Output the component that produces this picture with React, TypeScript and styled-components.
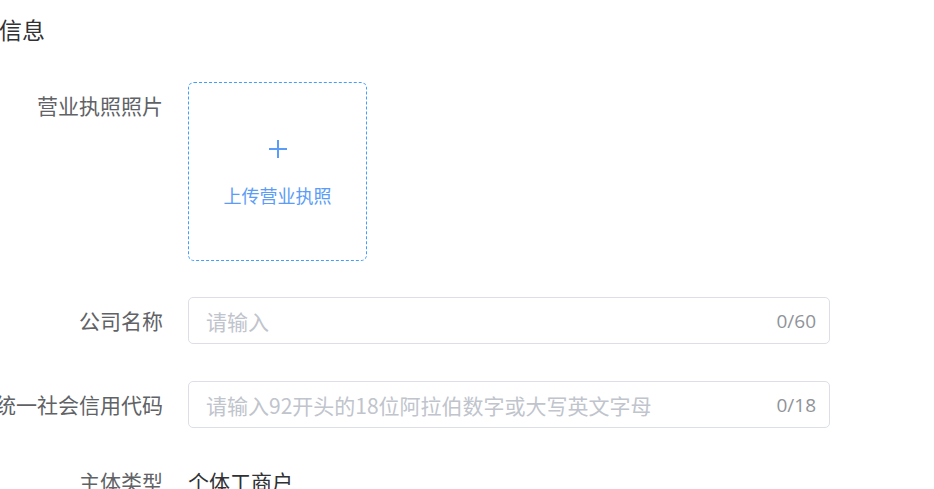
import React from 'react';
import styled, { createGlobalStyle } from 'styled-components';

const GlobalStyle = createGlobalStyle`
  html, body {
    margin: 0;
    padding: 0;
    background: #fff;
    overflow: hidden;
  }
  body {
    font-family: "Noto Sans CJK SC", "Liberation Sans", sans-serif;
  }
`;

const Page = styled.div`
  width: 934px;
  height: 489px;
  overflow: hidden;
  background: #fff;
`;

const SectionTitle = styled.h2`
  margin: 0;
  padding-top: 13px;
  margin-left: -47px;
  font-size: 23px;
  line-height: 32px;
  font-weight: 400;
  color: #303133;
`;

const Form = styled.div`
  margin-top: 37px;
  margin-left: -12px;
  display: flex;
  flex-direction: column;
`;

const FormItem = styled.div<{ $gap?: number }>`
  display: flex;
  align-items: flex-start;
  margin-bottom: ${(p) => p.$gap ?? 36}px;
`;

const Label = styled.label`
  flex: 0 0 200px;
  box-sizing: border-box;
  padding-right: 25px;
  text-align: right;
  font-size: 21px;
  line-height: 47px;
  color: #606266;
  white-space: nowrap;
`;

const Upload = styled.div`
  width: 179px;
  height: 179px;
  box-sizing: border-box;
  border: 1.5px dashed #409eff;
  border-radius: 6px;
  display: flex;
  flex-direction: column;
  align-items: center;
  justify-content: center;
  gap: 26px;
  cursor: pointer;
`;

const UploadText = styled.span`
  font-size: 18px;
  line-height: 20px;
  color: #5a9cf8;
`;

const InputWrap = styled.div`
  width: 642px;
  height: 47px;
  box-sizing: border-box;
  border: 1.5px solid #dcdfe6;
  border-radius: 5px;
  display: flex;
  align-items: center;
  padding: 0 13px 0 17px;
`;

const Input = styled.input`
  flex: 1;
  border: none;
  outline: none;
  background: transparent;
  font-family: inherit;
  font-size: 21px;
  color: #606266;
  padding: 0;

  &::placeholder {
    color: #c0c4cc;
  }
`;

const Counter = styled.span`
  font-family: "Open Sans", "Liberation Sans", sans-serif;
  font-size: 19px;
  color: #909399;
`;

const Value = styled.span`
  font-size: 21px;
  line-height: 47px;
  color: #303133;
`;

const PlusIcon = () => (
  <svg width="20" height="20" viewBox="0 0 20 20">
    <path d="M10 1v18M1 10h18" stroke="#5a9cf8" strokeWidth="2" fill="none" />
  </svg>
);

export default function App() {
  return (
    <Page>
      <GlobalStyle />
      <SectionTitle>基本信息</SectionTitle>
      <Form>
        <FormItem>
          <Label>营业执照照片</Label>
          <Upload>
            <PlusIcon />
            <UploadText>上传营业执照</UploadText>
          </Upload>
        </FormItem>
        <FormItem $gap={37}>
          <Label>公司名称</Label>
          <InputWrap>
            <Input placeholder="请输入" />
            <Counter>0/60</Counter>
          </InputWrap>
        </FormItem>
        <FormItem $gap={30}>
          <Label>统一社会信用代码</Label>
          <InputWrap>
            <Input placeholder="请输入92开头的18位阿拉伯数字或大写英文字母" />
            <Counter>0/18</Counter>
          </InputWrap>
        </FormItem>
        <FormItem>
          <Label>主体类型</Label>
          <Value>个体工商户</Value>
        </FormItem>
      </Form>
    </Page>
  );
}
